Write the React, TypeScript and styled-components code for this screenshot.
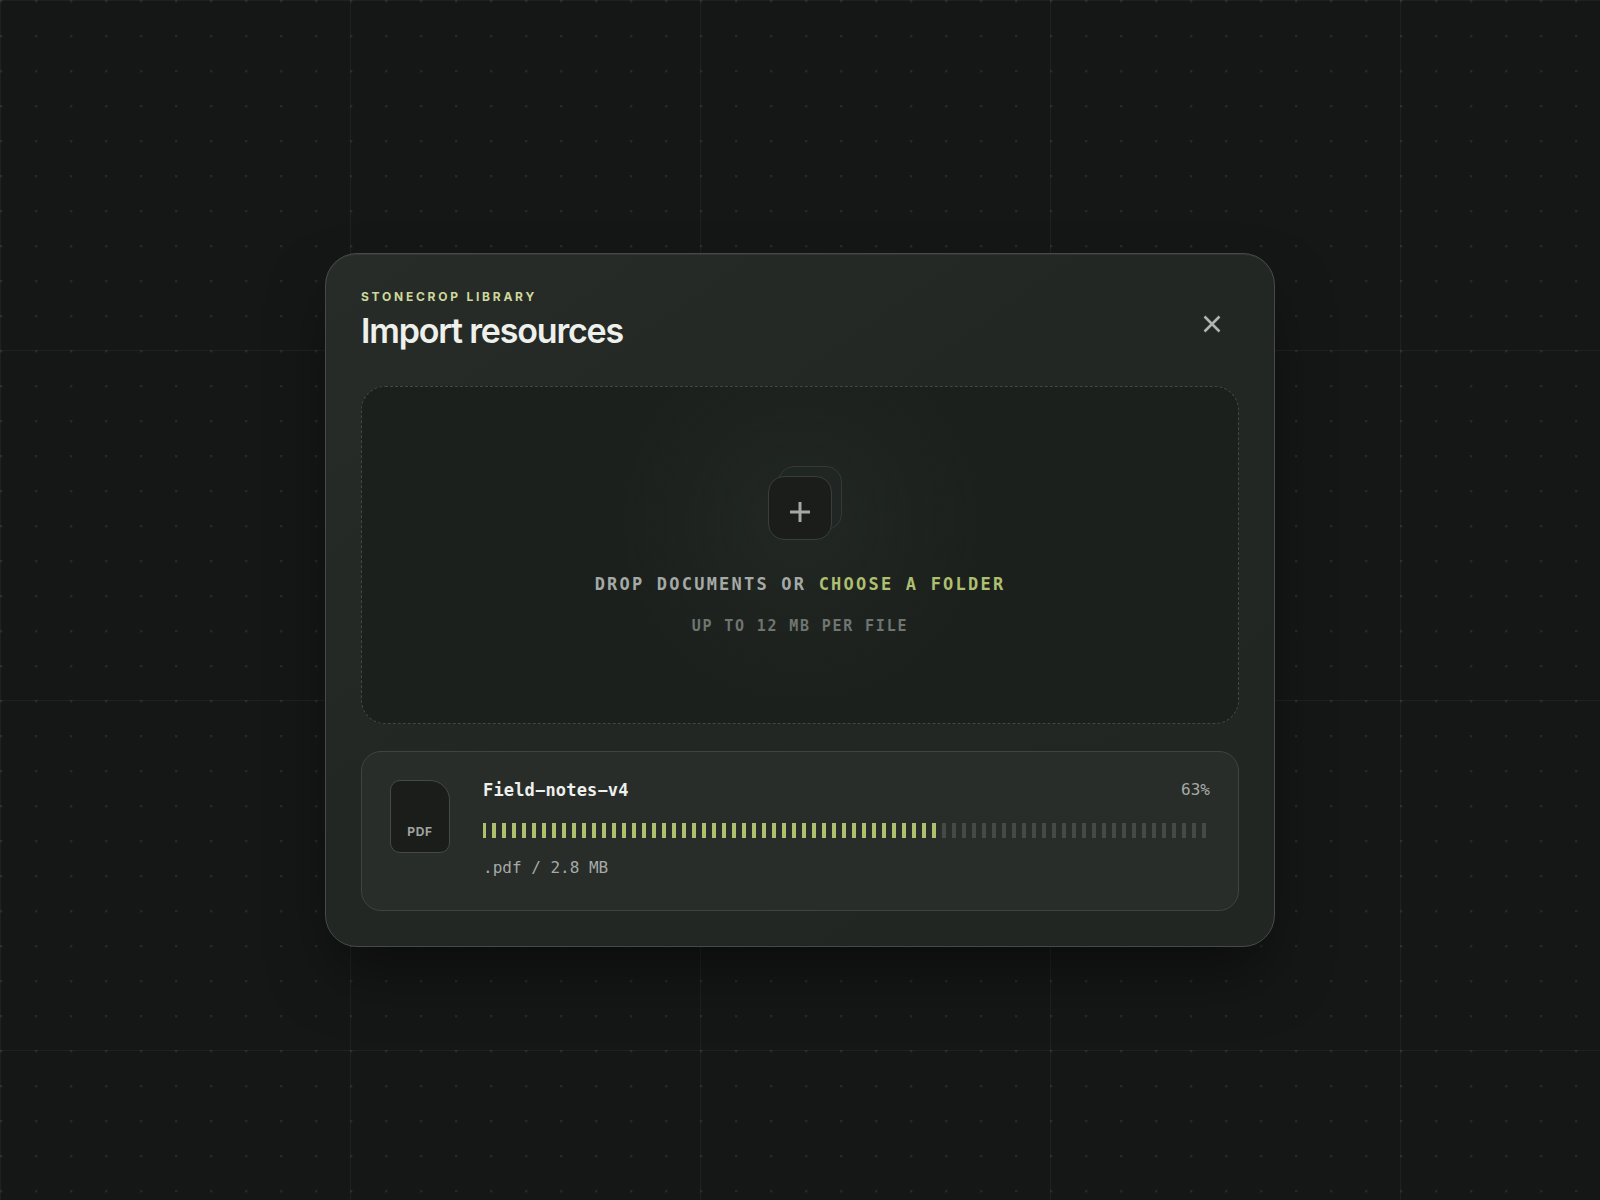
import React from "react";
import styled, { createGlobalStyle } from "styled-components";

const sans = `Inter, "Liberation Sans", sans-serif`;
const mono = `"DejaVu Sans Mono", "Liberation Mono", monospace`;

const GlobalStyle = createGlobalStyle`
  *, *::before, *::after { box-sizing: border-box; }
  body { margin: 0; background: #151716; }
`;

const Page = styled.main`
  min-height: 100vh;
  display: grid;
  place-items: center;
  padding: 24px;
  font-family: ${sans};
  color: #eef0ec;
  background-color: #151716;
  background-image:
    radial-gradient(circle at 1px 1px, rgba(255, 255, 255, 0.08) 1px, transparent 2px),
    linear-gradient(rgba(255, 255, 255, 0.045) 1px, transparent 1px),
    linear-gradient(90deg, rgba(255, 255, 255, 0.045) 1px, transparent 1px);
  background-size: 35px 35px, 350px 350px, 350px 350px;
`;

const Dialog = styled.section`
  width: 100%;
  max-width: 950px;
  padding: 35px;
  border: 1px solid #454a47;
  border-radius: 32px;
  background: linear-gradient(145deg, #272c29 0%, #222724 45%, #212622 100%);
  box-shadow:
    inset 0 1px 0 rgba(255, 255, 255, 0.06),
    0 32px 64px -12px rgba(0, 0, 0, 0.5);
`;

const Header = styled.header`
  display: flex;
  align-items: flex-end;
  justify-content: space-between;
  margin-bottom: 35px;
`;

const Eyebrow = styled.p`
  margin: 0 0 6px;
  font-size: 12px;
  line-height: 16px;
  font-weight: 700;
  letter-spacing: 0.23em;
  text-transform: uppercase;
  color: #ccd99b;
`;

const Title = styled.h1`
  margin: 0;
  font-size: 34px;
  line-height: 40px;
  font-weight: 600;
  letter-spacing: -0.035em;
`;

const CloseButton = styled.button`
  display: grid;
  place-items: center;
  width: 54px;
  height: 54px;
  padding: 0;
  border: 0;
  border-radius: 16px;
  background: transparent;
  color: #b0b4b1;
  cursor: pointer;
`;

const DropZone = styled.div`
  display: flex;
  flex-direction: column;
  align-items: center;
  justify-content: center;
  min-height: 338px;
  padding: 34px 32px 32px;
  border: 1px dashed #434845;
  border-radius: 24px;
  background:
    radial-gradient(circle at 50% 40%, rgba(48, 60, 50, 0.25), transparent 180px),
    #1c201d;
`;

const Stack = styled.div`
  position: relative;
  width: 64px;
  height: 64px;
  margin-bottom: 32px;
`;

const Sheet = styled.span<{ $back?: boolean }>`
  position: absolute;
  inset: ${(p) => (p.$back ? "-10px -10px 10px 10px" : "0")};
  display: grid;
  place-items: center;
  padding-top: 8px;
  border: 1px solid ${(p) => (p.$back ? "#343936" : "#3a3e3b")};
  border-radius: 16px;
  background: ${(p) => (p.$back ? "#202623" : "#1b1d1b")};
  color: #a5a8a5;
`;

const Prompt = styled.p`
  margin: 0;
  font: 700 17px/24px ${mono};
  letter-spacing: 0.13em;
  text-transform: uppercase;
  color: #a5aaa6;
`;

const FolderButton = styled.button`
  padding: 0;
  border: 0;
  background: none;
  font: inherit;
  letter-spacing: inherit;
  text-transform: inherit;
  color: #afbf70;
  cursor: pointer;
`;

const Hint = styled.p`
  margin: 20px 0 0;
  font: 700 15px/20px ${mono};
  letter-spacing: 0.12em;
  text-transform: uppercase;
  color: #6f7571;
`;

const FileCard = styled.article`
  display: flex;
  gap: 33px;
  margin-top: 27px;
  padding: 28px;
  min-height: 160px;
  border: 1px solid #3f4441;
  border-radius: 20px;
  background: #282d2a;
`;

const FileBadge = styled.div`
  display: flex;
  align-items: flex-end;
  justify-content: center;
  flex: none;
  width: 60px;
  height: 73px;
  padding-bottom: 12px;
  border: 1px solid #454a47;
  border-radius: 10px 20px 10px 10px;
  background: #1b1d1b;
  font-size: 12px;
  line-height: 16px;
  font-weight: 700;
  letter-spacing: 0.06em;
  color: #a0a4a1;
`;

const FileInfo = styled.div`
  flex: 1;
  min-width: 0;
`;

const FileRow = styled.div`
  display: flex;
  align-items: center;
  justify-content: space-between;
  line-height: 20px;
`;

const FileName = styled.h2`
  margin: 0;
  font: 700 17px/20px ${mono};
  letter-spacing: 0.01em;
`;

const FileMeta = styled.span`
  font: 400 16px/20px ${mono};
  color: #a5aaa6;
`;

const Track = styled.div`
  height: 15px;
  margin: 23px 0 20px;
  background: repeating-linear-gradient(90deg, #454a47 0 3px, transparent 3px 9px, #454a47 9px 10px);
`;

const Fill = styled.div`
  height: 100%;
  background: repeating-linear-gradient(90deg, #afbf70 0 3px, transparent 3px 9px, #afbf70 9px 10px);
`;

const file = { name: "Field−notes−v4", kind: "pdf", size: "2.8 MB", progress: 63 };

export default function App() {
  return (
    <>
      <GlobalStyle />
      <Page>
        <Dialog role="dialog" aria-labelledby="import-title">
          <Header>
            <div>
              <Eyebrow>Stonecrop Library</Eyebrow>
              <Title id="import-title">Import resources</Title>
            </div>
            <CloseButton type="button" aria-label="Close">
              <svg width="18" height="18" viewBox="0 0 18 18" fill="none" stroke="currentColor" strokeWidth="2.6">
                <path d="M1.5 1.5l15 15M16.5 1.5l-15 15" />
              </svg>
            </CloseButton>
          </Header>

          <DropZone>
            <Stack aria-hidden="true">
              <Sheet $back />
              <Sheet>
                <svg width="20" height="20" viewBox="0 0 20 20" fill="none" stroke="currentColor" strokeWidth="3">
                  <path d="M10 0v20M0 10h20" />
                </svg>
              </Sheet>
            </Stack>
            <Prompt>
              Drop documents or <FolderButton type="button">choose a folder</FolderButton>
            </Prompt>
            <Hint>Up to 12 MB per file</Hint>
          </DropZone>

          <FileCard>
            <FileBadge>{file.kind.toUpperCase()}</FileBadge>
            <FileInfo>
              <FileRow>
                <FileName>{file.name}</FileName>
                <FileMeta>{file.progress}%</FileMeta>
              </FileRow>
              <Track role="progressbar" aria-label={file.name} aria-valuenow={file.progress} aria-valuemin={0} aria-valuemax={100}>
                <Fill style={{ width: `${file.progress}%` }} />
              </Track>
              <FileRow>
                <FileMeta>.{file.kind} / {file.size}</FileMeta>
              </FileRow>
            </FileInfo>
          </FileCard>
        </Dialog>
      </Page>
    </>
  );
}
